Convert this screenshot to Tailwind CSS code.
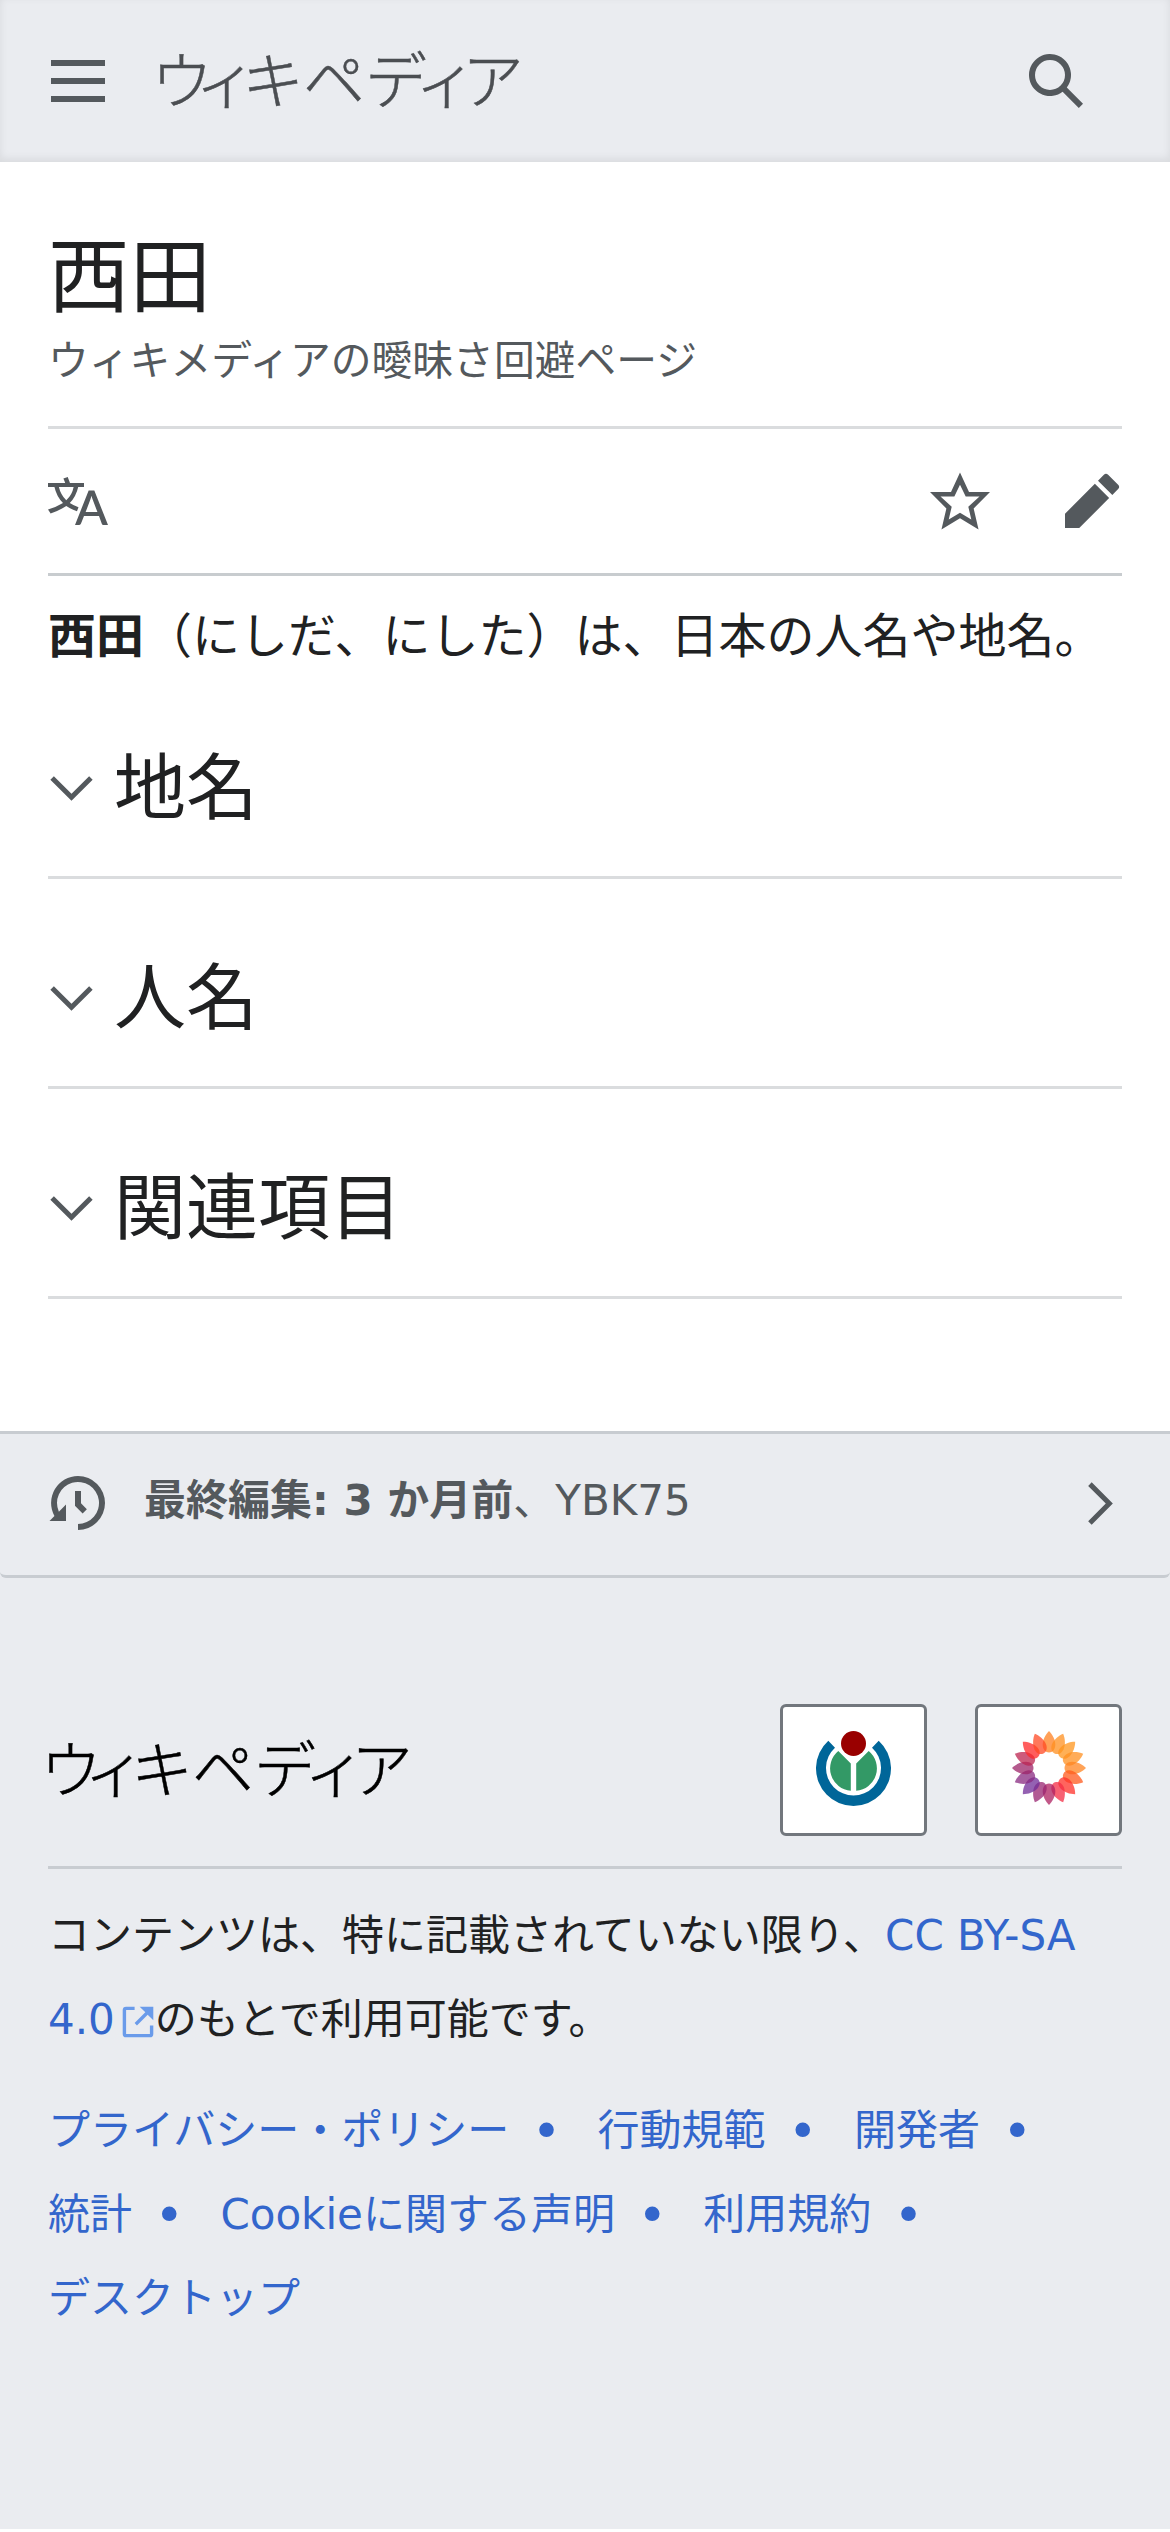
<!DOCTYPE html>
<html lang="ja">
<head>
    <meta charset="UTF-8">
    <meta name="viewport" content="width=device-width, initial-scale=1.0">
    <title>西田 - ウィキペディア</title>
    <script src="https://cdn.jsdelivr.net/npm/@tailwindcss/browser@4"></script>
</head>
<body class="bg-white text-[#202122] font-['DejaVu_Sans','Noto_Sans_CJK_JP',sans-serif]">
    <!-- Header -->
    <header class="flex items-center h-[162px] px-12 bg-[#eaecf0] text-[#54595d] shadow-[inset_0_-3px_9px_rgba(0,0,0,0.08)]">
        <button type="button" aria-label="メニュー">
            <svg class="block size-[60px]" viewBox="0 0 20 20" fill="currentColor"><path d="M1 3v2h18V3zm0 8h18V9H1zm0 6h18v-2H1z"/></svg>
        </button>
        <a href="#" class="ml-[51px]">
            <svg class="block w-[360px] h-[66px] overflow-visible" viewBox="0 0 360 66" fill="#4b4e52" stroke="#4b4e52" stroke-width="0.5">
                <text x="-8 36 83 144 206 256 303" y="56" font-size="62" font-weight="300">ウィキペディア</text>
            </svg>
        </a>
        <button type="button" class="ml-auto mr-9" aria-label="検索">
            <svg class="block size-[60px]" viewBox="0 0 20 20" fill="currentColor"><path d="M12.2 13.6a7 7 0 1 1 1.4-1.4l5.4 5.4-1.4 1.4zM13 8A5 5 0 1 0 3 8a5 5 0 0 0 10 0"/></svg>
        </button>
    </header>

    <!-- Main Content -->
    <main class="px-12 pb-[132px]">
        <div class="pt-[68px] pb-[35px] border-b-3 border-[#dadcde]">
            <h1 class="text-[81.6px] leading-[96px]">西田</h1>
            <p class="mt-[5px] text-[40.8px] leading-[60px] text-[#54595d]">ウィキメディアの曖昧さ回避ページ</p>
        </div>

        <!-- Page actions -->
        <div class="flex items-center h-[147px] border-b-3 border-[#c8cccf] text-[#54595d]">
            <svg class="size-[60px]" viewBox="0 0 20 20" fill="currentColor"><path d="M20 18h-1.44a.6.6 0 0 1-.4-.12.8.8 0 0 1-.23-.31L17 15h-5l-1 2.54a.8.8 0 0 1-.22.3.6.6 0 0 1-.4.14H9l4.55-11.47h1.89zm-3.53-4.31L14.89 9.5a12 12 0 0 1-.39-1.24q-.09.37-.19.69l-.19.56-1.58 4.19zm-6.3-1.58a13.4 13.4 0 0 1-2.91-1.41 11.46 11.46 0 0 0 2.81-5.37H12V4H7.31a4 4 0 0 0-.2-.56C6.87 2.79 6.6 2 6.6 2l-1.47.5s.4.89.6 1.5H0v1.33h2.15A11.23 11.23 0 0 0 5 10.7a17.2 17.2 0 0 1-5 2.1q.56.82.87 1.38a23.3 23.3 0 0 0 5.22-2.51 15.6 15.6 0 0 0 3.56 1.77zM3.63 5.33h4.91a8.1 8.1 0 0 1-2.45 4.45 9.1 9.1 0 0 1-2.46-4.45"/></svg>
            <svg class="ml-auto size-[60px]" viewBox="0 0 20 20" fill="currentColor"><path d="M20 7h-7L10 .5 7 7H0l5.46 5.47-1.64 7 6.18-3.7 6.18 3.73-1.63-7zm-10 6.9-3.76 2.27 1-4.28L3.5 8.5h4.61L10 4.6l1.9 3.9h4.6l-3.73 3.4 1 4.28z"/></svg>
            <svg class="ml-[72px] size-[60px]" viewBox="0 0 20 20" fill="currentColor"><path d="m16.77 8 1.94-2a1 1 0 0 0 0-1.41l-3.34-3.3a1 1 0 0 0-1.41 0L12 3.23zM1 14.25V19h4.75l9.96-9.96-4.75-4.75z"/></svg>
        </div>

        <p class="mt-[30px] mb-[3px] text-5xl leading-[60px]"><b>西田</b>（にしだ、にした）は、日本の人名や地名。</p>

        <!-- Sections -->
        <section class="flex items-center h-[210px] pt-8 border-b-3 border-[#dadcde]">
            <svg class="size-[47px] text-[#54595d]" viewBox="0 0 20 20" fill="currentColor"><path d="m17.5 4.75-7.5 7.5-7.5-7.5L1 6.25l9 9 9-9z"/></svg>
            <h2 class="ml-[19px] -mt-px text-7xl">地名</h2>
        </section>
        <section class="flex items-center h-[210px] pt-8 border-b-3 border-[#dadcde]">
            <svg class="size-[47px] text-[#54595d]" viewBox="0 0 20 20" fill="currentColor"><path d="m17.5 4.75-7.5 7.5-7.5-7.5L1 6.25l9 9 9-9z"/></svg>
            <h2 class="ml-[19px] -mt-px text-7xl">人名</h2>
        </section>
        <section class="flex items-center h-[210px] pt-8 border-b-3 border-[#dadcde]">
            <svg class="size-[47px] text-[#54595d]" viewBox="0 0 20 20" fill="currentColor"><path d="m17.5 4.75-7.5 7.5-7.5-7.5L1 6.25l9 9 9-9z"/></svg>
            <h2 class="ml-[19px] -mt-px text-7xl">関連項目</h2>
        </section>
    </main>

    <!-- Footer -->
    <footer class="h-[1098px] bg-[#eaecf0]">
        <div class="flex items-center h-[147px] px-12 border-t-3 border-b-3 border-[#c8ccd1] rounded-b-md text-[#54595d]">
            <svg class="size-[60px] -mt-[3px]" viewBox="0 0 20 20" fill="currentColor"><path d="M9 6v5h.06l2.48 2.47 1.41-1.41L11 10.11V6z"/><path d="M10 1a9 9 0 0 0-7.85 13.35L.5 16H6v-5.5l-2.38 2.38A7 7 0 1 1 10 17v2a9 9 0 0 0 0-18"/></svg>
            <p class="ml-9 -mt-2 text-[42px] leading-[60px]"><b>最終編集: 3 か月前</b>、YBK75</p>
            <svg class="ml-auto -mr-0.5 -mt-[3px] size-[47px]" viewBox="0 0 20 20" fill="currentColor"><path d="m4.75 2.5 7.5 7.5-7.5 7.5L6.25 19l9-9-9-9z"/></svg>
        </div>

        <div class="mx-12">
            <div class="flex pt-[126px] pb-[30px] border-b-3 border-[#c8ccd1]">
                <svg class="mt-[33px] w-[360px] h-[66px] overflow-visible" viewBox="0 0 360 66" stroke="#000" stroke-width="0.5">
                    <text x="-8 36 83 144 206 256 303" y="56" font-size="62" font-weight="300">ウィキペディア</text>
                </svg>
                <!-- Wikimedia badge -->
                <a href="#" class="flex items-start justify-center ml-auto w-[147px] h-[132px] pt-6 bg-white border-3 border-[#72777d] rounded-md">
                    <svg class="size-[75px]" viewBox="0 0 75 75">
                        <path fill="#069" d="M12.3 9.7A37.5 37.5 0 1 0 62.7 9.7L56 16.7A27.5 27.5 0 1 1 19 16.7z"/>
                        <path fill="#396" d="M22.3 20 34.8 32.5V59.8A22.5 22.5 0 0 1 22.3 20zM52.7 20 40.2 32.5V59.8A22.5 22.5 0 0 0 52.7 20z"/>
                        <circle cx="37.5" cy="12.5" r="12.5" fill="#900"/>
                    </svg>
                </a>
                <!-- MediaWiki badge -->
                <a href="#" class="flex items-start justify-center ml-12 w-[147px] h-[132px] pt-6 bg-white border-3 border-[#72777d] rounded-md">
                    <svg id="flower" class="size-[74px]" viewBox="-37 -37 74 74"></svg>
                </a>
            </div>

            <p class="mt-[25px] text-[42px] leading-[84px]">コンテンツは、特に記載されていない限り、<a href="#" class="text-[#3366cc]">CC BY-SA 4.0<svg class="inline-block ml-1.5 -mt-0.5 size-[34px] text-[#6a9bea]" viewBox="0 0 20 20" fill="currentColor"><path d="M17 17H3V3h5V1H3a2 2 0 0 0-2 2v14a2 2 0 0 0 2 2h14a2 2 0 0 0 2-2v-5h-2z"/><path d="m11 1 3.3 3.3L8 10.6 9.4 12l6.3-6.3L19 9V1z"/></svg></a>のもとで利用可能です。</p>

            <ul class="mt-[27px] text-[42px] leading-[84px] text-[#3366cc]">
                <li class="inline-block"><a href="#">プライバシー・ポリシー</a><span class="ml-[22.5px] mr-[23px] text-[50px] leading-none align-[-3px]">•</span></li>
                <li class="inline-block"><a href="#">行動規範</a><span class="ml-[22.5px] mr-[23px] text-[50px] leading-none align-[-3px]">•</span></li>
                <li class="inline-block"><a href="#">開発者</a><span class="ml-[22.5px] mr-[23px] text-[50px] leading-none align-[-3px]">•</span></li>
                <li class="inline-block"><a href="#">統計</a><span class="ml-[22.5px] mr-[23px] text-[50px] leading-none align-[-3px]">•</span></li>
                <li class="inline-block"><a href="#">Cookieに関する声明</a><span class="ml-[22.5px] mr-[23px] text-[50px] leading-none align-[-3px]">•</span></li>
                <li class="inline-block"><a href="#">利用規約</a><span class="ml-[22.5px] mr-[23px] text-[50px] leading-none align-[-3px]">•</span></li>
                <li class="inline-block"><a href="#">デスクトップ</a></li>
            </ul>
        </div>
    </footer>

    <script>
        // Petal colours, clockwise from the top
        const petals = [
            '#ff8020', '#ff9020', '#ff961e', '#ff9020', '#ff8420', '#ff5a1c', '#ff3028', '#f42c44',
            '#ae2060', '#982470', '#702c98', '#882a80', '#9c2468', '#bc2450', '#ff2828', '#ff4a24'
        ];
        const flower = document.getElementById('flower');

        petals.forEach((color, i) => {
            const petal = document.createElementNS('http://www.w3.org/2000/svg', 'path');
            petal.setAttribute('d', 'M0-37C3.6-33.5 6.4-28 6.3-23 6.2-18.5 3.5-15.5 0-15.5S-6.2-18.5-6.3-23C-6.4-28-3.6-33.5 0-37z');
            petal.setAttribute('fill', color);
            petal.setAttribute('class', 'opacity-75');
            petal.setAttribute('transform', `rotate(${i * 22.5})`);
            flower.appendChild(petal);
        });
    </script>
</body>
</html>
